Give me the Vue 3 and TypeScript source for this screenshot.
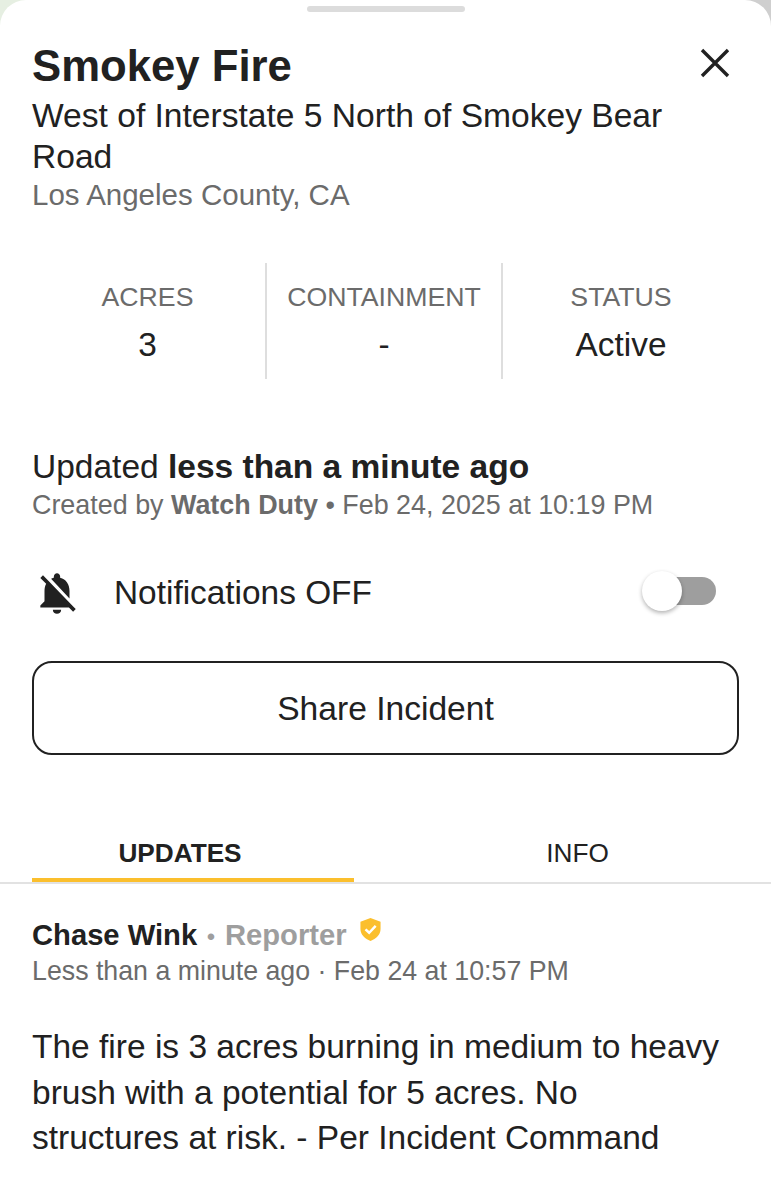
<script setup lang="ts">
const stats = [
  { label: 'ACRES', value: '3' },
  { label: 'CONTAINMENT', value: '-' },
  { label: 'STATUS', value: 'Active' },
]
</script>

<template>
  <div class="sheet">
    <div class="handle"></div>
    <header class="head">
      <div class="head-text">
        <h1 class="title">Smokey Fire</h1>
        <p class="addr">West of Interstate 5 North of Smokey Bear Road</p>
        <p class="county">Los Angeles County, CA</p>
      </div>
      <svg class="close" width="30" height="30" viewBox="0 0 30 30">
        <path d="M2 2 L28 28 M28 2 L2 28" stroke="#212121" stroke-width="3.4" fill="none" />
      </svg>
    </header>

    <section class="stats">
      <div v-for="s in stats" :key="s.label" class="stat">
        <div class="stat-label">{{ s.label }}</div>
        <div class="stat-value">{{ s.value }}</div>
      </div>
    </section>

    <section class="updated">
      <div class="updated-main">Updated <b>less than a minute ago</b></div>
      <div class="updated-sub">Created by <b>Watch Duty</b> • Feb 24, 2025 at 10:19 PM</div>
    </section>

    <section class="notif">
      <svg class="bell" width="50" height="50" viewBox="0 0 24 24">
        <path fill="#212121" d="M20 18.69 7.84 6.14 5.27 3.49 4 4.76l2.8 2.8v.01c-.52.99-.8 2.16-.8 3.42v5l-2 2v1h13.73l2 2L21 19.72l-1-1.03zM12 22c1.11 0 2-.89 2-2h-4c0 1.11.89 2 2 2zm6-7.32V11c0-3.08-1.64-5.64-4.5-6.32V4c0-.83-.67-1.5-1.5-1.5s-1.5.67-1.5 1.5v.68c-.15.03-.29.08-.42.12-.1.03-.2.07-.3.11h-.01c-.2.08-.4.17-.59.27-.01 0-.01 0-.02.01L18 14.68z" />
      </svg>
      <span class="notif-label">Notifications OFF</span>
      <span class="toggle"><span class="knob"></span></span>
    </section>

    <button class="share" type="button">Share Incident</button>

    <nav class="tabs">
      <div class="tab active">UPDATES</div>
      <div class="tab other">INFO</div>
    </nav>

    <article class="post">
      <div class="author">
        <b>Chase Wink</b><span class="dot"> • </span><b class="role">Reporter</b>
        <svg class="shield" width="23" height="25" viewBox="0 0 24 26">
          <path fill="#fbbf2d" d="M12 1 L22.5 4.8 V12.5 C22.5 18.5 17.8 22.8 12 25 C6.2 22.8 1.5 18.5 1.5 12.5 V4.8 Z" />
          <path fill="none" stroke="#fff" stroke-width="2.6" d="M6.8 12.8 L10.6 16.4 L17.4 9.2" />
        </svg>
      </div>
      <div class="time">Less than a minute ago · Feb 24 at 10:57 PM</div>
      <p class="body">The fire is 3 acres burning in medium to heavy brush with a potential for 5 acres. No structures at risk. - Per Incident Command</p>
    </article>
  </div>
</template>

<style>
html, body { margin: 0; background: linear-gradient(90deg, #e6efe2 50%, #cfcfcf 50%); }
</style>

<style scoped>
.sheet {
  box-sizing: border-box;
  width: 771px;
  height: 1200px;
  background: #fff;
  border-radius: 26px 26px 0 0;
  font-family: "Liberation Sans", Arial, sans-serif;
  color: #212121;
  overflow: hidden;
}
.handle {
  width: 158px;
  height: 6px;
  margin: 6px auto 0;
  border-radius: 3px;
  background: #dcdcdc;
}
.head {
  display: flex;
  justify-content: space-between;
  align-items: flex-start;
  padding: 29px 41px 0 32px;
}
.head-text { width: 650px; }
.title { margin: 0; font-size: 43.7px; line-height: 50px; font-weight: 700; }
.addr { margin: 4px 0 0; font-size: 33.6px; line-height: 41px; }
.county { margin: 0; font-size: 29.5px; line-height: 36px; color: #6b6b6b; }
.close { margin-top: 7px; }
.stats {
  display: grid;
  grid-template-columns: 235px 236px 238px;
  margin: 50px 0 0 30px;
  height: 116px;
}
.stat {
  display: flex;
  flex-direction: column;
  align-items: center;
  padding-top: 18px;
  border-left: 2px solid #dedede;
}
.stat:first-child { border-left: none; }
.stat-label { font-size: 26.7px; line-height: 32px; color: #6b6b6b; }
.stat-value { font-size: 33.4px; line-height: 44px; margin-top: 10px; }
.updated { margin: 68px 32px 0; }
.updated-main { font-size: 33.5px; line-height: 40px; }
.updated-sub { font-size: 26.9px; line-height: 34px; margin-top: 1px; color: #6b6b6b; }
.notif {
  display: flex;
  align-items: center;
  margin: 46px 55px 0 32px;
  height: 50px;
}
.bell { flex: none; }
.notif-label { flex: 1; font-size: 33.4px; margin-left: 32px; }
.toggle {
  position: relative;
  width: 72px;
  height: 28px;
  margin-bottom: 4px;
  border-radius: 14px;
  background: #9e9e9e;
}
.knob {
  position: absolute;
  left: -2px;
  top: -6px;
  width: 40px;
  height: 40px;
  border-radius: 50%;
  background: #fff;
  box-shadow: 0 2px 4px rgba(0, 0, 0, 0.3);
}
.share {
  display: block;
  box-sizing: border-box;
  width: 707px;
  height: 94px;
  margin: 43px 32px 0;
  padding: 2px 0 0;
  background: #fff;
  border: 2px solid #212121;
  border-radius: 20px;
  font: inherit;
  font-size: 33.6px;
  color: #212121;
}
.tabs {
  display: flex;
  margin-top: 75px;
  padding: 0 32px;
  height: 52px;
  border-bottom: 2px solid #e2e2e2;
}
.tab {
  box-sizing: border-box;
  width: 322px;
  height: 52px;
  text-align: center;
  font-size: 26.2px;
  line-height: 46px;
}
.tab.other { flex: 1; padding-left: 62px; }
.tab.active {
  padding-right: 26px;
  font-weight: 700;
  border-bottom: 4px solid #fbbf2d;
}
.post { padding: 29px 32px 0; }
.author { display: flex; align-items: baseline; font-size: 29.2px; line-height: 44px; white-space: pre; }
.dot { color: #9e9e9e; font-size: 24px; line-height: 24px; padding: 0 3px; }
.role { color: #9e9e9e; }
.shield { margin: 4px 0 0 12px; align-self: flex-start; }
.time { font-size: 26.75px; line-height: 30px; color: #6b6b6b; margin-top: -1px; }
.body { margin: 38px 0 0; width: 690px; font-size: 33.5px; line-height: 45.5px; }
</style>
